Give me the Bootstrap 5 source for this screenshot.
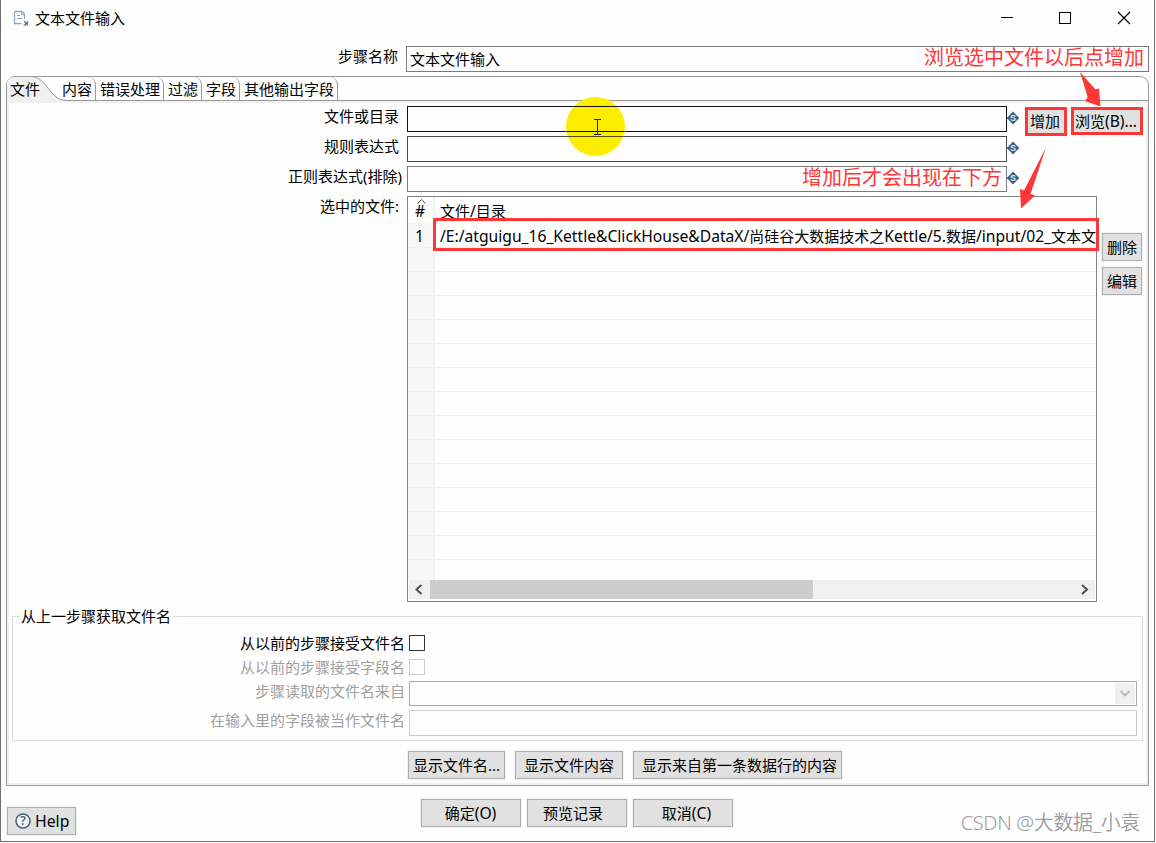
<!DOCTYPE html>
<html lang="zh-CN">
<head>
<meta charset="utf-8">
<title>文本文件输入</title>
<link href="https://cdn.jsdelivr.net/npm/bootstrap@5.3.0/dist/css/bootstrap.min.css" rel="stylesheet">
<style>
body{font-family:"Noto Sans","Noto Sans CJK SC",sans-serif;font-size:15px;line-height:20px;color:#000;background:#fff;overflow:hidden;white-space:nowrap}
.win{width:1155px;height:842px;border:1px solid #707070;border-top:0;background:#fefefe}
.titlebar{height:46px;padding:8px 0 0 12px}
.fld{height:26px;border:1px solid #7a7a7a;border-radius:0;background:#fefefe;padding:0 3px;color:#000;font-size:15px;line-height:24px;overflow:hidden}
.fld.focus-in{border-color:#111}
.fld.strong{border-color:#4a4a4a}
.fld.off{border-color:#ccc}
.step-label{width:397px;text-align:right}
.panel{margin:4px 0 0 5px;width:1143px;height:710px;border:1px solid #999;border-radius:9px 9px 0 0}
.tabs{height:24px;border-bottom:1px solid #999}
.tab-x{height:23px;border-right:1px solid #999;border-top-right-radius:8px;padding-left:4px;line-height:25px}
.pane{height:684px;border:2px solid #f0f0f0;padding:3px 0 0 0}
.lab{width:398px;padding-right:8px;text-align:right;height:26px;line-height:20px}
.lab.wide{padding-right:5px}
.wbtn{background:#e1e1e1;border:1px solid #adadad;border-radius:0;color:#000;padding:0;height:28px;line-height:26px;font-size:15px;text-align:center;box-shadow:0 0 0 1px #f3f3f3}
.wbtn.hot{border:3px solid #fd3735;box-shadow:none;line-height:22px}
.filebox{width:690px;height:406px;border:1px solid #828282;background:#fefefe}
.idx{width:27px;border-right:2px solid #f0f0f5;flex:none}
.trow{height:24px;border-bottom:1px solid #efefef;line-height:26px}
.trow .idx{background:#f7f7f7}
.trow.first{height:25px}
.path-cell{padding-left:5px;overflow:hidden}
.lat{font-size:15.65px}
.sbar{height:19px;background:#f0f0f0;margin:0 1px}
.thumb{width:383px;background:#cdcdcd}
.group{margin:14px 0 0 3px;width:1131px;height:125px;border:1px solid #dcdcdc}
.group-title{top:-11px;left:6px;padding:0 2px;background:#fefefe}
.glab{width:396px;padding-right:4px;text-align:right;color:#a0a0a0}
.cbx{width:16px;height:16px;border:1px solid #333}
.note{font-size:20px;line-height:24px;color:#fd3735}
.dia{font-family:"Liberation Sans",sans-serif;font-size:9px;font-weight:700}
.mark-csdn{font-size:20px;font-weight:350;letter-spacing:-.35px;line-height:24px;color:#9c9c9c;right:14px;bottom:6px}
</style>
</head>
<body>
<div class="win position-relative">
  <div class="titlebar d-flex">
    <svg width="16" height="18" viewBox="0 0 16 18" class="flex-shrink-0" fill="none"><path d="M1.500 3.500h7.500l2.500 2.500v5M1.500 3.500v12h7" stroke="#8fa6bb" stroke-width="1.300"/><path d="M8.500 4v2.500h3M4 7.500h3M4 10.500h5" stroke="#8fa6bb"/><path d="M11 13l2.500 2.500M14.500 14v3h-3z" stroke="#5b7c96" stroke-width="1.200"/></svg>
    <span style="margin-left:6px">文本文件输入</span>
    <svg class="position-absolute" style="left:1000px;top:10px" width="132" height="16" viewBox="0 0 132 16" fill="none" stroke="#000"><path d="M0 7.500h12"/><rect x="58.500" y="2.500" width="11" height="11"/><path d="M117 2l12 12M129 2l-12 12" stroke-width="1.200"/></svg>
  </div>
  <div class="d-flex">
    <div class="step-label">步骤名称</div>
    <div class="fld" style="margin-left:8px;width:743px">文本文件输入</div>
  </div>

  <div class="panel">
    <div class="tabs d-flex">
      <svg width="51" height="24" viewBox="0 0 51 24" class="flex-shrink-0" style="overflow:visible"><path d="M0 25V7Q0 0 8 0H24C40 0 42 23.500 60 23.500V25Z" fill="#f0f0f0"/><path d="M24 -.5C40 -.5 42 23.500 60 23.500" fill="none" stroke="#999"/><text x="3" y="17.500" font-size="15">文件</text></svg>
      <div class="tab-x" style="width:38px">内容</div>
      <div class="tab-x" style="width:68px">错误处理</div>
      <div class="tab-x" style="width:38px">过滤</div>
      <div class="tab-x" style="width:38px">字段</div>
      <div class="tab-x" style="width:98px">其他输出字段</div>
    </div>
    <div class="pane">
      <div class="d-flex mb-1"><div class="lab">文件或目录</div><div class="fld focus-in" style="width:600px"></div><svg class="dia" width="13" height="26" viewBox="0 0 13 26"><path d="M6 5.500l6.300 6.500L6 18.500-.3 12z" fill="#3f617f"/><text x="6" y="15.200" text-anchor="middle" fill="#dde7ee">S</text></svg>
        <div class="wbtn hot" style="margin:1px 0 -4px 5px;width:42px;height:29px;padding-right:2px">增加</div><div class="wbtn hot" style="margin:1px 0 -4px 4px;width:72px;height:28px;padding-right:2px">浏览<span class="lat">(B)...</span></div></div>
      <div class="d-flex mb-1"><div class="lab">规则表达式</div><div class="fld strong" style="width:600px"></div><svg class="dia" width="13" height="26" viewBox="0 0 13 26"><path d="M6 5.500l6.300 6.500L6 18.500-.3 12z" fill="#3f617f"/><text x="6" y="15.200" text-anchor="middle" fill="#dde7ee">S</text></svg></div>
      <div class="d-flex mb-1"><div class="lab wide">正则表达式(排除)</div><div class="fld" style="width:600px"></div><svg class="dia" width="13" height="26" viewBox="0 0 13 26"><path d="M6 5.500l6.300 6.500L6 18.500-.3 12z" fill="#3f617f"/><text x="6" y="15.200" text-anchor="middle" fill="#dde7ee">S</text></svg></div>
      <div class="d-flex">
        <div class="lab">选中的文件:</div>
        <div class="filebox d-flex flex-column">
          <div class="d-flex" style="height:26px;line-height:28px"><div class="idx position-relative" style="padding-left:7px"><span class="lat">#</span><svg class="position-absolute" style="left:9px;top:2px" width="9" height="5" fill="none" stroke="#555"><path d="M.5 4.500l4-4 4 4"/></svg></div><div style="padding-left:5px">文件<span class="lat">/</span>目录</div></div>
          <div class="trow first d-flex"><div class="idx" style="padding-left:7px"><span class="lat">1</span></div><div class="path-cell"><span class="lat">/E:/atguigu_16_Kettle&amp;ClickHouse&amp;DataX/</span>尚硅谷大数据技术之<span class="lat">Kettle/5.</span>数据<span class="lat">/input/02_</span>文本文件</div></div>
          <div class="trow d-flex"><div class="idx"></div></div><div class="trow d-flex"><div class="idx"></div></div><div class="trow d-flex"><div class="idx"></div></div><div class="trow d-flex"><div class="idx"></div></div><div class="trow d-flex"><div class="idx"></div></div><div class="trow d-flex"><div class="idx"></div></div><div class="trow d-flex"><div class="idx"></div></div><div class="trow d-flex"><div class="idx"></div></div><div class="trow d-flex"><div class="idx"></div></div><div class="trow d-flex"><div class="idx"></div></div><div class="trow d-flex"><div class="idx"></div></div><div class="trow d-flex"><div class="idx"></div></div><div class="trow d-flex"><div class="idx"></div></div>
          <div class="trow d-flex border-0" style="height:20px"><div class="idx"></div></div>
          <div class="sbar d-flex"><svg width="21" height="19" fill="none" stroke="#505050" stroke-width="2"><path d="M12.500 5l-5 4.500 5 4.500"/></svg><div class="thumb"></div><svg class="ms-auto" width="20" height="19" fill="none" stroke="#505050" stroke-width="2"><path d="M7 5l5 4.500-5 4.500"/></svg></div>
        </div>
        <div class="d-flex flex-column" style="margin:37px 0 0 5px;gap:6px"><div class="wbtn" style="width:40px">删除</div><div class="wbtn" style="width:40px">编辑</div></div>
      </div>
      <div class="group position-relative">
        <div class="group-title position-absolute">从上一步骤获取文件名</div>
        <div class="d-flex" style="padding-top:18px"><div class="glab text-black" style="margin-top:-2px">从以前的步骤接受文件名</div><div class="cbx"></div></div>
        <div class="d-flex" style="margin-top:6px"><div class="glab" style="margin-top:-2px">从以前的步骤接受字段名</div><div class="cbx" style="border-color:#ccc"></div></div>
        <div class="d-flex" style="margin-top:4px"><div class="glab">步骤读取的文件名来自</div><div class="fld d-flex" style="width:728px;height:25px;padding:1px;border-color:#aaa"><svg class="ms-auto" width="20" height="21" style="background:#f0f0f0" fill="none" stroke="#b8b8b8" stroke-width="1.800"><path d="M5.500 8l4.500 4.500L14.500 8"/></svg></div></div>
        <div class="d-flex" style="margin-top:4px"><div class="glab">在输入里的字段被当作文件名</div><div class="fld off" style="width:728px"></div></div>
      </div>
      <div class="d-flex" style="margin:10px 0 0 399px;gap:10px"><div class="wbtn" style="width:97px">显示文件名...</div><div class="wbtn" style="width:108px">显示文件内容</div><div class="wbtn" style="width:209px;padding-left:4px">显示来自第一条数据行的内容</div></div>
    </div>
  </div>
  <div class="d-flex" style="margin:13px 0 0 6px">
    <div class="wbtn d-flex" style="width:69px;margin-top:8px;padding-left:7px"><svg width="16" height="26" viewBox="0 0 16 26"><circle cx="8" cy="13" r="7" fill="#f4f6f8" stroke="#3f617f" stroke-width="1.500"/><text x="8" y="17.300" font-size="12" font-weight="600" text-anchor="middle" fill="#3f617f">?</text></svg><span style="margin-left:4px;font-size:15.8px">Help</span></div>
    <div class="wbtn" style="margin-left:345px;width:100px;padding-right:1px">确定<span class="lat">(O)</span></div><div class="wbtn" style="margin-left:6px;width:100px;padding-right:8px">预览记录</div><div class="wbtn" style="margin-left:6px;width:100px;padding-left:7px">取消<span class="lat">(C)</span></div>
  </div>

  <!-- highlight and pointer over the first field -->
  <svg class="position-absolute" style="left:564px;top:96px" width="62" height="62"><circle cx="30.500" cy="30.500" r="29.500" fill="#fdee00"/><path d="M9 10.500h43M2 35.500h57" stroke="#111"/><path d="M3 40.500h55" stroke="#4a4a00"/><path d="M29 23.500h7M29 38.500h7M32.500 24v14" stroke="#222"/></svg>
  <!-- annotations -->
  <div class="note position-absolute" style="left:923px;top:46px">浏览选中文件以后点增加</div>
  <div class="note position-absolute" style="left:801px;top:166px">增加后才会出现在下方</div>
  <div class="position-absolute" style="left:432px;top:218px;width:666px;height:33px;border:3px solid #fd3735"></div>
  <svg class="position-absolute" style="left:1009px;top:70px" width="110" height="142" fill="#fd3735"><path d="M70 2L85.500 19.500 89 18.500 90.500 36.500 75 31 77.700 27z"/><path d="M36 77.500L20.500 124 25 125.500 11 138.500 10 119 14 120.500z"/></svg>
  <div class="mark-csdn position-absolute">CSDN @大数据_小袁</div>
</div>
<script src="https://cdn.jsdelivr.net/npm/bootstrap@5.3.0/dist/js/bootstrap.bundle.min.js"></script>
</body>
</html>
